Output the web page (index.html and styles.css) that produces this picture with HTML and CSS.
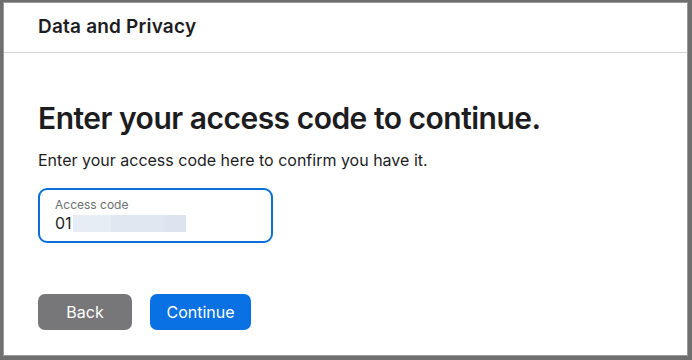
FILE: index.html
```html
<!DOCTYPE html>
<html lang="en">
<head>
    <meta charset="UTF-8">
    <meta name="viewport" content="width=device-width, initial-scale=1.0">
    <title>Data and Privacy</title>
    <link rel="stylesheet" href="styles.css">
</head>
<body>
    <div class="window">
        <div class="header">Data and Privacy</div>
        <div class="content">
            <h1 class="title">Enter your access code to continue.</h1>
            <p class="subtitle">Enter your access code here to confirm you have it.</p>
            <div class="field">
                <div class="field-label">Access code</div>
                <div class="field-value">01<span class="blur"><span class="blur-a"></span><span class="blur-b"></span><span class="blur-c"></span></span></div>
            </div>
            <div class="buttons">
                <div class="btn btn-back">Back</div>
                <div class="btn btn-continue">Continue</div>
            </div>
        </div>
    </div>
</body>
</html>
```

FILE: styles.css
```css
* { margin: 0; padding: 0; box-sizing: border-box; }
html, body { height: 100%; }
body {
    background: #6f6f6f;
    font-family: Inter, "Liberation Sans", Arial, sans-serif;
    color: #1d1d1f;
    padding: 3px 5px 5px 4px;
}
.window {
    background: #fff;
    height: 100%;
    box-shadow: 0 0 0 1px #9a9a9a;
}
.header {
    height: 50px;
    border-bottom: 1px solid #d4d4d4;
    padding: 12px 0 0 34px;
    font-size: 19px;
    font-weight: 600;
    letter-spacing: 0.2px;
}
.content {
    padding: 47px 0 0 34px;
}
.title {
    font-size: 30px;
    font-weight: 600;
    letter-spacing: -0.5px;
    line-height: 36px;
}
.subtitle {
    margin-top: 14px;
    font-size: 16px;
    line-height: 20px;
}
.field {
    margin-top: 18px;
    width: 235px;
    height: 55px;
    border: 2px solid #0a6fd6;
    border-radius: 9px;
    padding: 8px 0 0 15px;
}
.field-label {
    font-size: 12px;
    color: #6e6e73;
    line-height: 14px;
}
.field-value {
    display: flex;
    align-items: center;
    font-size: 16px;
    line-height: 20px;
    margin-top: 1px;
}
.blur {
    display: flex;
    height: 17px;
    margin-left: 1px;
}
.blur-a { width: 38px; background: #e6edf5; }
.blur-b { width: 54px; background: #dfe7f1; }
.blur-c { width: 21px; background: #dbe4ef; }
.buttons {
    display: flex;
    gap: 18px;
    margin-top: 51px;
}
.btn {
    height: 36px;
    border-radius: 7px;
    color: #fff;
    font-size: 16px;
    display: flex;
    align-items: center;
    justify-content: center;
}
.btn-back { width: 94px; background: #777779; }
.btn-continue { width: 101px; background: #0971e3; }
```
